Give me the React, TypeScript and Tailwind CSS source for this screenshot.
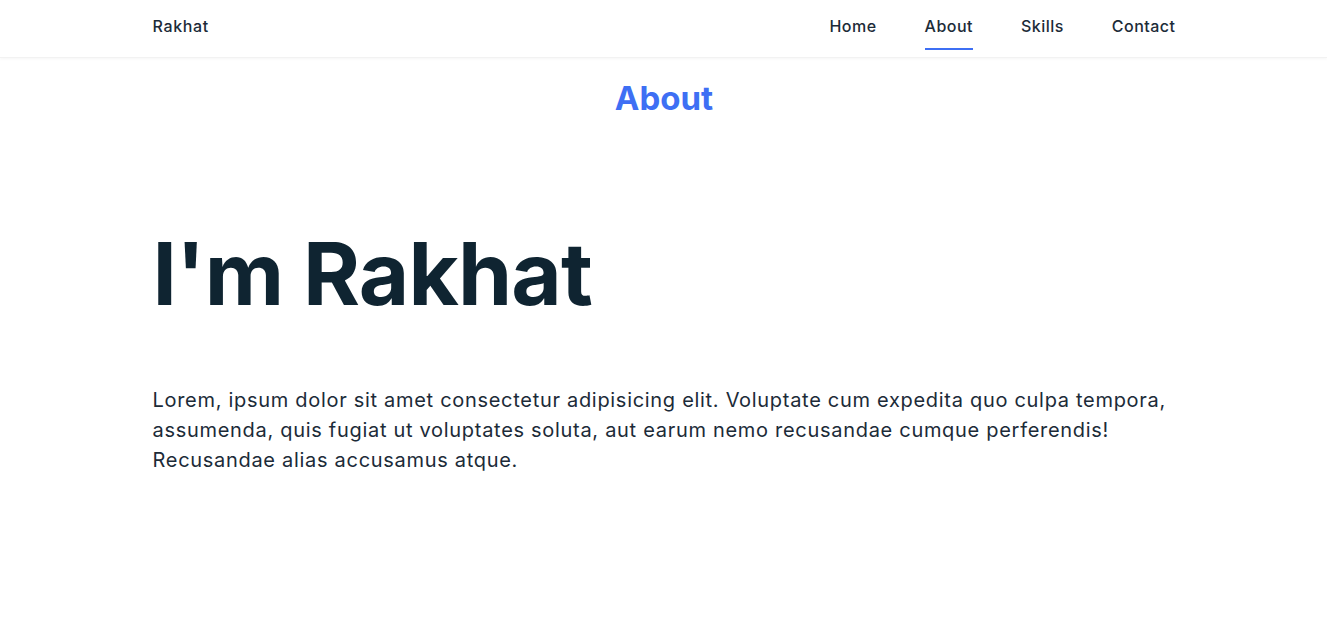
import React from 'react';

const links = ['Home', 'About', 'Skills', 'Contact'];

const App: React.FC = () => {
  return (
    <div className="min-h-screen bg-white font-['Inter',sans-serif] text-[#0f2431]">
      <header className="h-[58px] border-b border-[#f2f2f2] shadow-[0_1px_3px_rgba(0,0,0,0.04)]">
        <nav className="max-w-[1024px] mx-auto h-full flex items-center justify-between pl-px pb-[6px]">
          <a className="text-[16px] font-medium tracking-[0.04em] text-[#1c2b38]">Rakhat</a>
          <ul className="flex gap-12 text-[16px] font-medium tracking-[0.03em] text-[#1c2b38]">
            {links.map(l => (
              <li key={l} className="relative">
                {l}
                {l === 'About' && <span className="absolute left-0 right-0 -bottom-[12px] h-[2px] bg-[#3e6ff4]" />}
              </li>
            ))}
          </ul>
        </nav>
      </header>

      <section className="max-w-[1024px] mx-auto pl-px">
        <h2 className="text-center text-[33px] font-bold text-[#3e6ff4] mt-[20px] leading-[40px]">About</h2>
        <h1 className="mt-[101px] text-[87px] font-bold leading-[110px] tracking-[-0.01em]">I'm Rakhat</h1>
        <p className="mt-[56px] text-[20px] leading-[30px] tracking-[0.035em] text-[#1c2b38]">
          Lorem, ipsum dolor sit amet consectetur adipisicing elit. Voluptate cum expedita quo culpa tempora, assumenda, quis fugiat ut voluptates soluta, aut earum nemo recusandae cumque perferendis! Recusandae alias accusamus atque.
        </p>
      </section>
    </div>
  );
};

export default App;
